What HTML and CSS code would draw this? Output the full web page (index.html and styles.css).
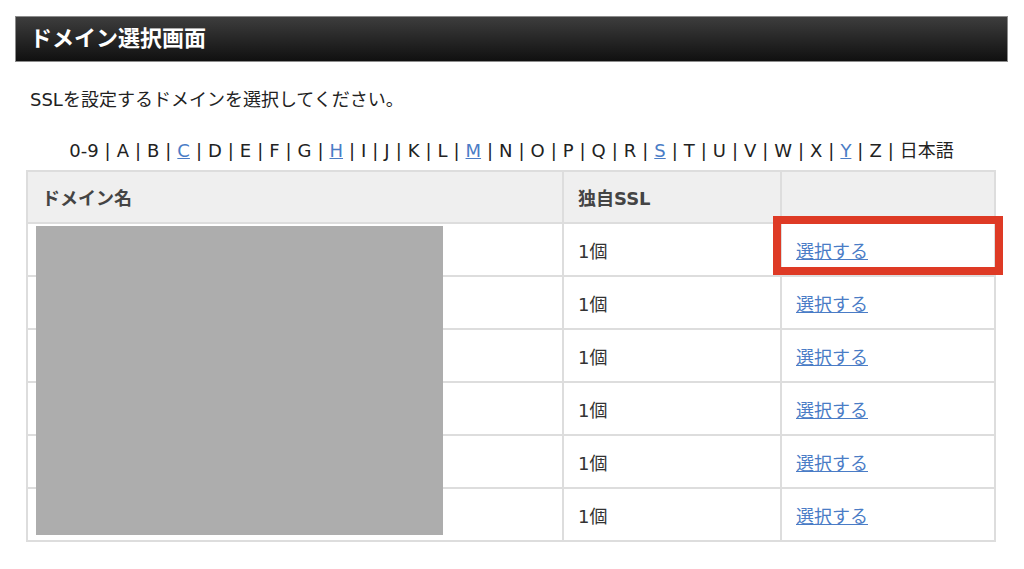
FILE: index.html
```html
<!DOCTYPE html>
<html lang="ja">
<head>
  <meta charset="UTF-8">
  <meta name="viewport" content="width=device-width, initial-scale=1.0">
  <title>ドメイン選択画面</title>
  <link rel="stylesheet" href="styles.css">
</head>
<body>
  <div class="page">
    <h1 class="title-bar">ドメイン選択画面</h1>

    <p class="lead">SSLを設定するドメインを選択してください。</p>

    <p class="alpha">0-9 | A | B | <a href="#">C</a> | D | E | F | G | <a href="#">H</a> | I | J | K | L | <a href="#">M</a> | N | O | P | Q | R | <a href="#">S</a> | T | U | V | W | X | <a href="#">Y</a> | Z | 日本語</p>

    <div class="table-wrap">
      <table class="domains">
        <thead>
          <tr>
            <th class="col-name">ドメイン名</th>
            <th class="col-ssl">独自SSL</th>
            <th class="col-act"></th>
          </tr>
        </thead>
        <tbody>
          <tr><td></td><td>1個</td><td><a href="#">選択する</a></td></tr>
          <tr><td></td><td>1個</td><td><a href="#">選択する</a></td></tr>
          <tr><td></td><td>1個</td><td><a href="#">選択する</a></td></tr>
          <tr><td></td><td>1個</td><td><a href="#">選択する</a></td></tr>
          <tr><td></td><td>1個</td><td><a href="#">選択する</a></td></tr>
          <tr><td></td><td>1個</td><td><a href="#">選択する</a></td></tr>
        </tbody>
      </table>

      <div class="mask"></div>
      <div class="highlight"></div>
    </div>
  </div>
</body>
</html>
```

FILE: styles.css
```css
body {
  margin: 0;
  background-color: #fff;
  color: #222;
  font-family: "DejaVu Sans", "Noto Sans CJK JP", sans-serif;
}

.page {
  padding: 16px 16px 0 15px;
}

.title-bar {
  margin: 0;
  height: 46px;
  box-sizing: border-box;
  padding-left: 14px;
  border: 1px solid #8c8c8c;
  background: linear-gradient(#3d3d3d, #101010);
  color: #fff;
  font-size: 22px;
  font-weight: bold;
  line-height: 44px;
}

.lead {
  margin: 25px 0 0 15px;
  font-size: 18px;
  line-height: 26px;
}

.alpha {
  margin: 25px 0 6px;
  text-align: center;
  font-size: 18px;
  line-height: 26px;
  word-spacing: 0.25px;
}

a {
  color: #4a7cc6;
  text-decoration: underline;
}

.table-wrap {
  position: relative;
  width: 970px;
  margin-left: 11px;
}

.domains {
  width: 100%;
  border-collapse: collapse;
  table-layout: fixed;
  font-size: 18px;
  color: #333;
}

.domains th,
.domains td {
  box-sizing: border-box;
  border: 2px solid #dddddd;
  padding: 0 14px;
  text-align: left;
  height: 53px;
}

.domains th {
  height: 52px;
  background-color: #efefef;
  color: #444;
  font-weight: bold;
}

.col-name { width: 536px; }
.col-ssl { width: 218px; }

.mask {
  position: absolute;
  left: 10px;
  top: 56px;
  width: 407px;
  height: 309px;
  background-color: #adadad;
}

.highlight {
  position: absolute;
  left: 747px;
  top: 46px;
  width: 230px;
  height: 59px;
  box-sizing: border-box;
  border: 8px solid #de3a25;
}
```
